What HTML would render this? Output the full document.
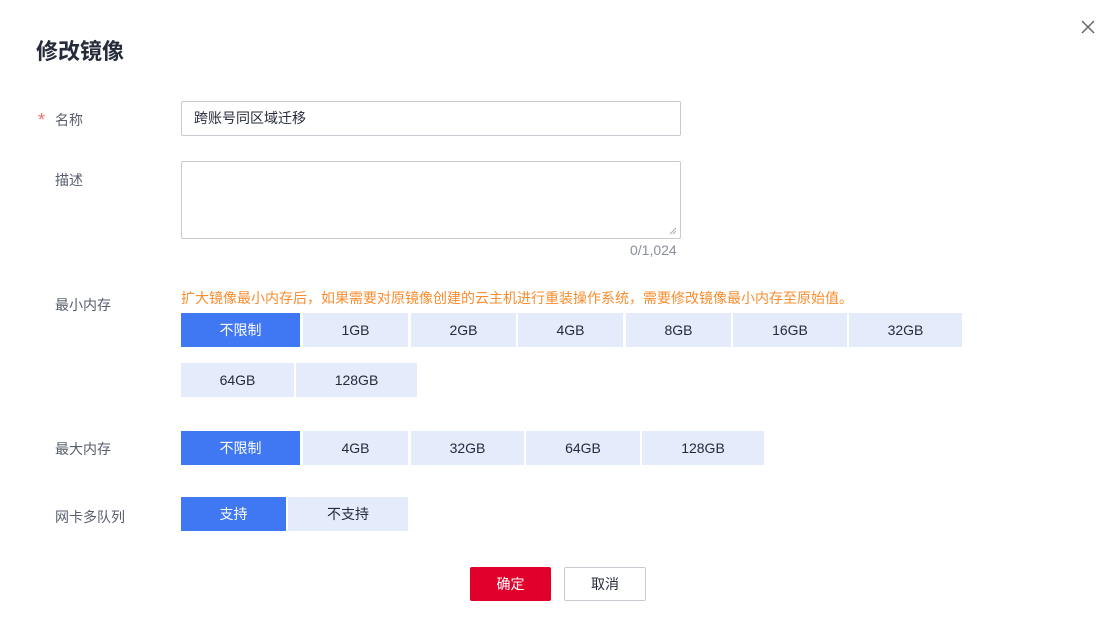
<!DOCTYPE html>
<html><head><meta charset="utf-8"><style>
body{margin:0;width:1109px;height:639px;background:#fff;position:relative;font-family:"Liberation Sans","Noto Sans CJK SC",sans-serif;overflow:hidden}
.a{position:absolute}
.lbl{position:absolute;left:55px;font-size:14px;color:#575d6c}
.b{position:absolute;height:34px;line-height:34px;text-align:center;font-size:14px;background:#e4ebfb;color:#252b3a}
.b.on{background:#3f78f2;color:#fff}
</style></head><body>
<div class="a" style="left:36px;top:34px;font-size:22px;font-weight:bold;color:#252b3a">修改镜像</div>
<svg class="a" style="left:1080px;top:19px" width="16" height="16"><path d="M2 2L14 14M14 2L2 14" stroke="#666" stroke-width="1.5"/></svg>
<div class="a" style="left:38px;top:110px;color:#f66f6a;font-size:18px">*</div>
<div class="lbl" style="top:110px">名称</div>
<div class="a" style="left:181px;top:101px;width:498px;height:33px;border:1px solid #c7cad1;border-radius:2px;font-size:14px;line-height:33px;color:#252b3a;text-indent:12px">跨账号同区域迁移</div>
<div class="lbl" style="top:170px">描述</div>
<div class="a" style="left:181px;top:161px;width:498px;height:76px;border:1px solid #c7cad1;border-radius:2px"></div>
<svg class="a" style="left:669px;top:227px" width="8" height="8"><path d="M1 7L7 1M4 7L7 4" stroke="#aaa" stroke-width="1"/></svg>
<div class="a" style="left:630px;top:242px;font-size:14px;color:#8a8e99">0/1,024</div>
<div class="lbl" style="top:295px">最小内存</div>
<div class="a" style="left:181px;top:288px;font-size:14px;color:#fa8c2e">扩大镜像最小内存后，如果需要对原镜像创建的云主机进行重装操作系统，需要修改镜像最小内存至原始值。</div>
<div class="b on" style="left:181px;top:313px;width:119px">不限制</div>
<div class="b" style="left:303px;top:313px;width:105px">1GB</div>
<div class="b" style="left:411px;top:313px;width:105px">2GB</div>
<div class="b" style="left:518px;top:313px;width:105px">4GB</div>
<div class="b" style="left:626px;top:313px;width:105px">8GB</div>
<div class="b" style="left:733px;top:313px;width:114px">16GB</div>
<div class="b" style="left:849px;top:313px;width:113px">32GB</div>
<div class="b" style="left:181px;top:363px;width:113px">64GB</div>
<div class="b" style="left:296px;top:363px;width:121px">128GB</div>
<div class="lbl" style="top:439px">最大内存</div>
<div class="b on" style="left:181px;top:431px;width:119px">不限制</div>
<div class="b" style="left:303px;top:431px;width:105px">4GB</div>
<div class="b" style="left:411px;top:431px;width:113px">32GB</div>
<div class="b" style="left:526px;top:431px;width:114px">64GB</div>
<div class="b" style="left:642px;top:431px;width:122px">128GB</div>
<div class="lbl" style="top:507px">网卡多队列</div>
<div class="b on" style="left:181px;top:497px;width:105px">支持</div>
<div class="b" style="left:288px;top:497px;width:120px">不支持</div>
<div class="a" style="left:470px;top:567px;width:81px;height:34px;line-height:34px;background:#e1002b;color:#fff;text-align:center;font-size:14px;border-radius:2px">确定</div>
<div class="a" style="left:564px;top:567px;width:80px;height:32px;line-height:32px;border:1px solid #c7cad1;color:#252b3a;text-align:center;font-size:14px;border-radius:2px">取消</div>
</body></html>
